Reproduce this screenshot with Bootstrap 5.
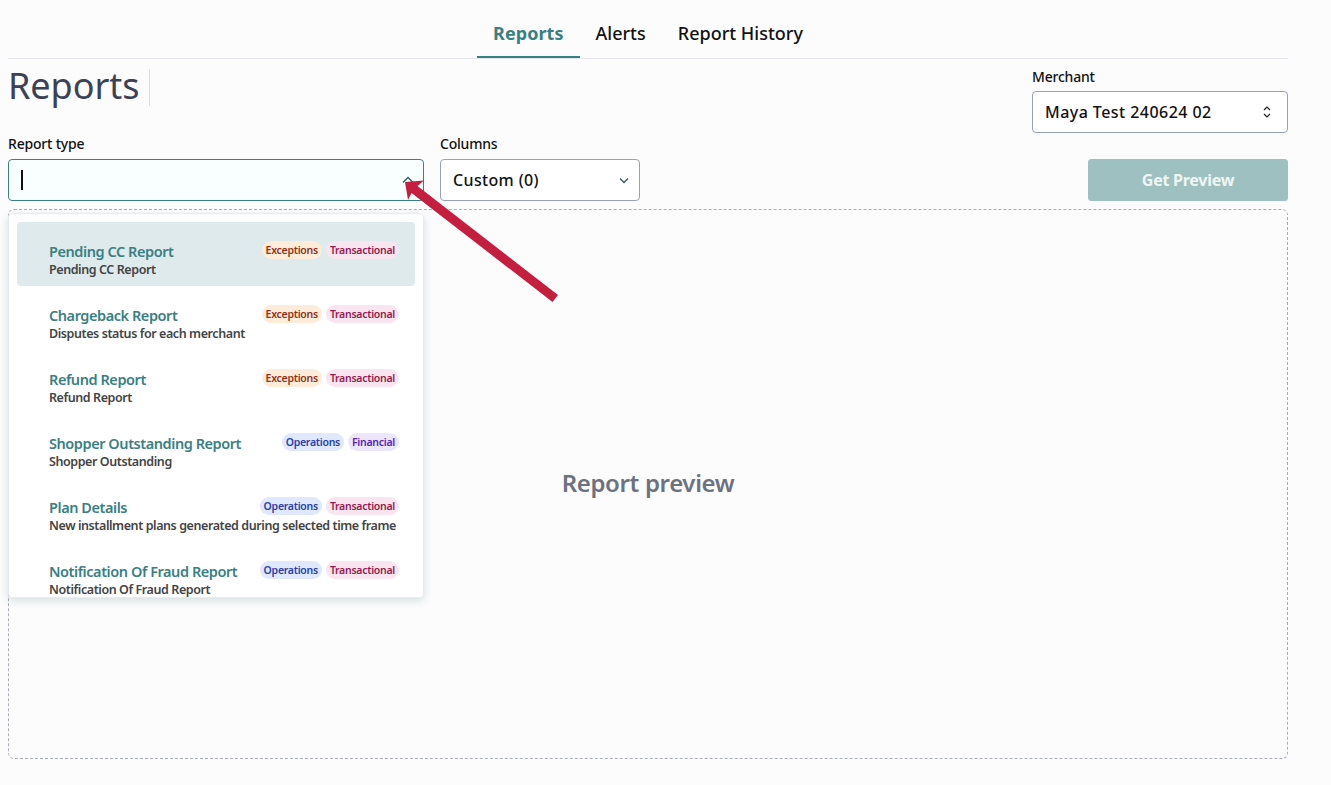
<!DOCTYPE html>
<html lang="en">
<head>
<meta charset="utf-8">
<title>Reports</title>
<link href="https://cdn.jsdelivr.net/npm/bootstrap@5.3.0/dist/css/bootstrap.min.css" rel="stylesheet">
<style>
html,body{height:100%}
body{background:#fcfcfd;font-family:"Noto Sans","Open Sans",sans-serif;color:#111;overflow:hidden;letter-spacing:-.2px}
.shell{width:1280px;margin-left:8px;position:relative}
.tabbar{height:59px;border-bottom:1px solid #e4e7ec}
.tabbar a{display:block;height:58px;padding:20px 16px 0;font-size:18px;line-height:27px;font-weight:500;color:#111;text-decoration:none;letter-spacing:0}
.tabbar a.on{color:#3a8082;font-weight:700;border-bottom:2px solid #3a8082;letter-spacing:.05px}
.headrow{height:77px}
.pagetitle{font-size:36px;line-height:40px;font-weight:400;color:#3b4256;margin:10px 0 0;padding-right:10px;border-right:1px solid #d9dce3;letter-spacing:-.05px;height:37px}
.pagetitle span{display:block;margin-top:-3px}
.fieldlabel{display:block;font-size:14px;line-height:16px;font-weight:500;margin-bottom:7px;color:#111}
.merchantcol .fieldlabel{margin-bottom:6px}
.selectbox{height:42px;border:1px solid #98a0b3;border-radius:4px;background:#fff;display:flex;align-items:center;justify-content:space-between;padding:0 10px 0 12px;font-size:16px;font-weight:500;color:#111;letter-spacing:.35px}
.merchantcol{width:256px;padding-top:10px}
.merchantcol .selectbox{padding-right:15px;letter-spacing:.45px}
.typebox{width:416px;border-color:#3a8082;background:#f8fffe;padding-right:9px}
.columnsbox{width:200px}
.caret{width:1.5px;height:20px;background:#111;display:block}
.previewbtn.btn{--bs-btn-disabled-bg:#9fc0c1;--bs-btn-disabled-border-color:#9fc0c1;--bs-btn-disabled-color:#eef5f5;--bs-btn-disabled-opacity:1;width:200px;height:42px;border-radius:3px;font-size:16px;font-weight:700;margin-top:23px;padding:0;letter-spacing:-.25px}
.previewarea{height:550px;margin-top:8px;padding-bottom:2px;border:1px dashed #a9adb5;border-radius:6px;color:#6c7280;font-size:24px;font-weight:600;letter-spacing:-.35px}
.dropmenu{position:absolute;left:0;top:213px;width:416px;height:385px;background:#fff;border:1px solid #e8ecef;border-radius:4px;box-shadow:0 3px 8px rgba(70,110,115,.2);padding:8px;overflow:hidden}
.opt{height:64px;padding:20px 16px 0 32px;border-radius:4px;display:flex;justify-content:space-between;align-items:flex-start}
.opt.sel{background:#deeaeb}
.optname{font-size:14.5px;line-height:19px;font-weight:600;color:#3a8082;letter-spacing:-.44px;white-space:nowrap}
.optdesc{font-size:12.5px;line-height:17px;font-weight:600;color:#444;letter-spacing:-.42px;white-space:nowrap}
.tagset{display:flex;gap:4px;margin-top:-1px;position:absolute;right:24px}
.tag{font-size:10.5px;line-height:18px;height:18px;padding:0 4px;border-radius:9px;font-weight:600;letter-spacing:-.28px;white-space:nowrap}
.t-exc{background:#fdecd9;color:#8c3419}
.t-tra{background:#f8e5f0;color:#961c50}
.t-ope{background:#dfe8fc;color:#2a3fa8}
.t-fin{background:#ece6fa;color:#5b22b8}
.pointer{position:absolute;left:395px;top:170px;width:170px;height:140px;pointer-events:none}
</style>
</head>
<body>
<div class="shell">
  <nav class="tabbar d-flex justify-content-center">
    <a class="on" href="#">Reports</a>
    <a href="#">Alerts</a>
    <a href="#">Report History</a>
  </nav>
  <div class="headrow d-flex justify-content-between align-items-start">
    <h1 class="pagetitle"><span>Reports</span></h1>
    <div class="merchantcol">
      <label class="fieldlabel">Merchant</label>
      <div class="selectbox"><span>Maya Test 240624 02</span>
        <svg width="10" height="14" viewBox="0 0 10 14" fill="none" stroke="#222" stroke-width="1.2"><path d="M2 5L5 2L8 5M2 9L5 12L8 9"/></svg>
      </div>
    </div>
  </div>
  <div class="d-flex justify-content-between align-items-start">
    <div class="d-flex gap-3">
      <div>
        <label class="fieldlabel">Report type</label>
        <div class="selectbox typebox"><span class="caret"></span>
          <svg width="12" height="8" viewBox="0 0 12 8" fill="none" stroke="#2f5d60" stroke-width="1.3"><path d="M1 6.5L6 1.5L11 6.5"/></svg>
        </div>
      </div>
      <div>
        <label class="fieldlabel">Columns</label>
        <div class="selectbox columnsbox"><span>Custom (0)</span>
          <svg width="10" height="7" viewBox="0 0 10 7" fill="none" stroke="#3a5560" stroke-width="1.3"><path d="M1 1.5L5 5.5L9 1.5"/></svg>
        </div>
      </div>
    </div>
    <button class="btn previewbtn" type="button" disabled>Get Preview</button>
  </div>
  <div class="previewarea d-flex align-items-center justify-content-center">Report preview</div>
  <div class="dropmenu">
    <div class="opt sel"><div><div class="optname">Pending CC Report</div><div class="optdesc">Pending CC Report</div></div><div class="tagset"><span class="tag t-exc">Exceptions</span><span class="tag t-tra">Transactional</span></div></div>
    <div class="opt"><div><div class="optname">Chargeback Report</div><div class="optdesc">Disputes status for each merchant</div></div><div class="tagset"><span class="tag t-exc">Exceptions</span><span class="tag t-tra">Transactional</span></div></div>
    <div class="opt"><div><div class="optname">Refund Report</div><div class="optdesc">Refund Report</div></div><div class="tagset"><span class="tag t-exc">Exceptions</span><span class="tag t-tra">Transactional</span></div></div>
    <div class="opt"><div><div class="optname">Shopper Outstanding Report</div><div class="optdesc">Shopper Outstanding</div></div><div class="tagset"><span class="tag t-ope">Operations</span><span class="tag t-fin">Financial</span></div></div>
    <div class="opt"><div><div class="optname">Plan Details</div><div class="optdesc">New installment plans generated during selected time frame</div></div><div class="tagset"><span class="tag t-ope">Operations</span><span class="tag t-tra">Transactional</span></div></div>
    <div class="opt"><div><div class="optname">Notification Of Fraud Report</div><div class="optdesc">Notification Of Fraud Report</div></div><div class="tagset"><span class="tag t-ope">Operations</span><span class="tag t-tra">Transactional</span></div></div>
  </div>
  <svg class="pointer" viewBox="0 0 170 140"><path d="M2 12L21 10.5L14.5 16L155 125L149.5 132L8.5 23L5 30Z" fill="#c51f3f"/></svg>
</div>
<script src="https://cdn.jsdelivr.net/npm/bootstrap@5.3.0/dist/js/bootstrap.bundle.min.js"></script>
</body>
</html>
